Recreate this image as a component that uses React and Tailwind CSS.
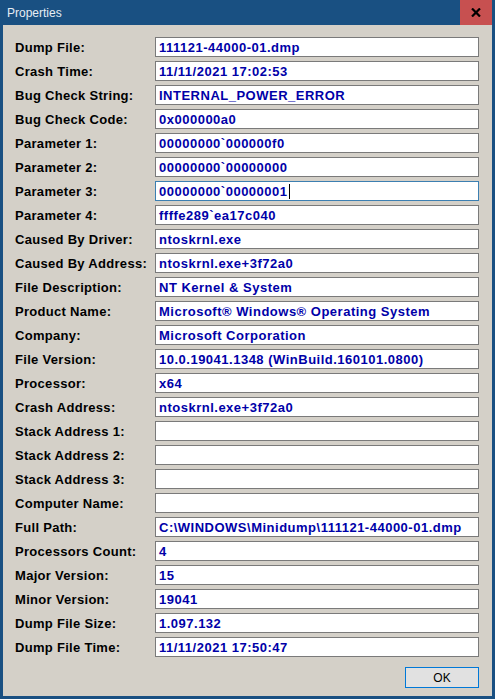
import React from "react";

const fields = [
    ["Dump File:", "111121-44000-01.dmp"],
    ["Crash Time:", "11/11/2021 17:02:53"],
    ["Bug Check String:", "INTERNAL_POWER_ERROR"],
    ["Bug Check Code:", "0x000000a0"],
    ["Parameter 1:", "00000000`000000f0"],
    ["Parameter 2:", "00000000`00000000"],
    ["Parameter 3:", "00000000`00000001", true],
    ["Parameter 4:", "ffffe289`ea17c040"],
    ["Caused By Driver:", "ntoskrnl.exe"],
    ["Caused By Address:", "ntoskrnl.exe+3f72a0"],
    ["File Description:", "NT Kernel & System"],
    ["Product Name:", "Microsoft® Windows® Operating System"],
    ["Company:", "Microsoft Corporation"],
    ["File Version:", "10.0.19041.1348 (WinBuild.160101.0800)"],
    ["Processor:", "x64"],
    ["Crash Address:", "ntoskrnl.exe+3f72a0"],
    ["Stack Address 1:", ""],
    ["Stack Address 2:", ""],
    ["Stack Address 3:", ""],
    ["Computer Name:", ""],
    ["Full Path:", "C:\\WINDOWS\\Minidump\\111121-44000-01.dmp"],
    ["Processors Count:", "4"],
    ["Major Version:", "15"],
    ["Minor Version:", "19041"],
    ["Dump File Size:", "1.097.132"],
    ["Dump File Time:", "11/11/2021 17:50:47"],
];

const Row = ({label, value, focused}) => (
    <div className="flex items-center h-[20px]">
        <div className="w-[140px] shrink-0 text-[13px] font-bold text-black tracking-[0.3px] leading-none whitespace-nowrap">
            {label}
        </div>
        <div
            className={
                "flex items-center w-[324px] h-[20px] bg-white border pl-[3px] " +
                (focused ? "border-[#3c7fb1]" : "border-[#7a7a7a]")
            }
        >
            <span className="text-[13px] font-bold text-[#0000a8] tracking-[0.5px] leading-none whitespace-nowrap">
                {value}
            </span>
            {focused && <span className="ml-[1px] w-[1px] h-[15px] bg-black" />}
        </div>
    </div>
);

const App = () => {
    return (
        <div
            className="w-[495px] h-[699px] bg-[#195082] flex flex-col overflow-hidden"
            style={{fontFamily: '"Liberation Sans", Arial, sans-serif'}}
        >
            {/* title bar */}
            <div className="h-[25px] shrink-0 flex items-center justify-between">
                <span className="pl-[7px] text-[12px] text-[#e6edf4]">Properties</span>
                <div className="w-[32px] h-[25px] mr-[3px] bg-[#c75050] flex items-center justify-center">
                    <svg width="10" height="9" viewBox="0 0 10 9">
                        <path d="M1 0.5 L9 8.5 M9 0.5 L1 8.5" stroke="#000" strokeWidth="2.2" />
                    </svg>
                </div>
            </div>

            {/* body */}
            <div className="flex-1 mx-[3px] mb-[3px] bg-[#d4d0c8] pt-[12px] pl-[12px] pr-[13px] pb-[8px] flex flex-col">
                <div className="flex flex-col gap-[4px]">
                    {fields.map(([label, value, focused]) => (
                        <Row key={label} label={label} value={value} focused={focused} />
                    ))}
                </div>
                <div className="flex justify-end mt-[10px]">
                    <button className="w-[74px] h-[21px] bg-[#e1e1e1] border border-[#0078d7] text-[12px] text-black">
                        OK
                    </button>
                </div>
            </div>
        </div>
    );
};

export default App;
